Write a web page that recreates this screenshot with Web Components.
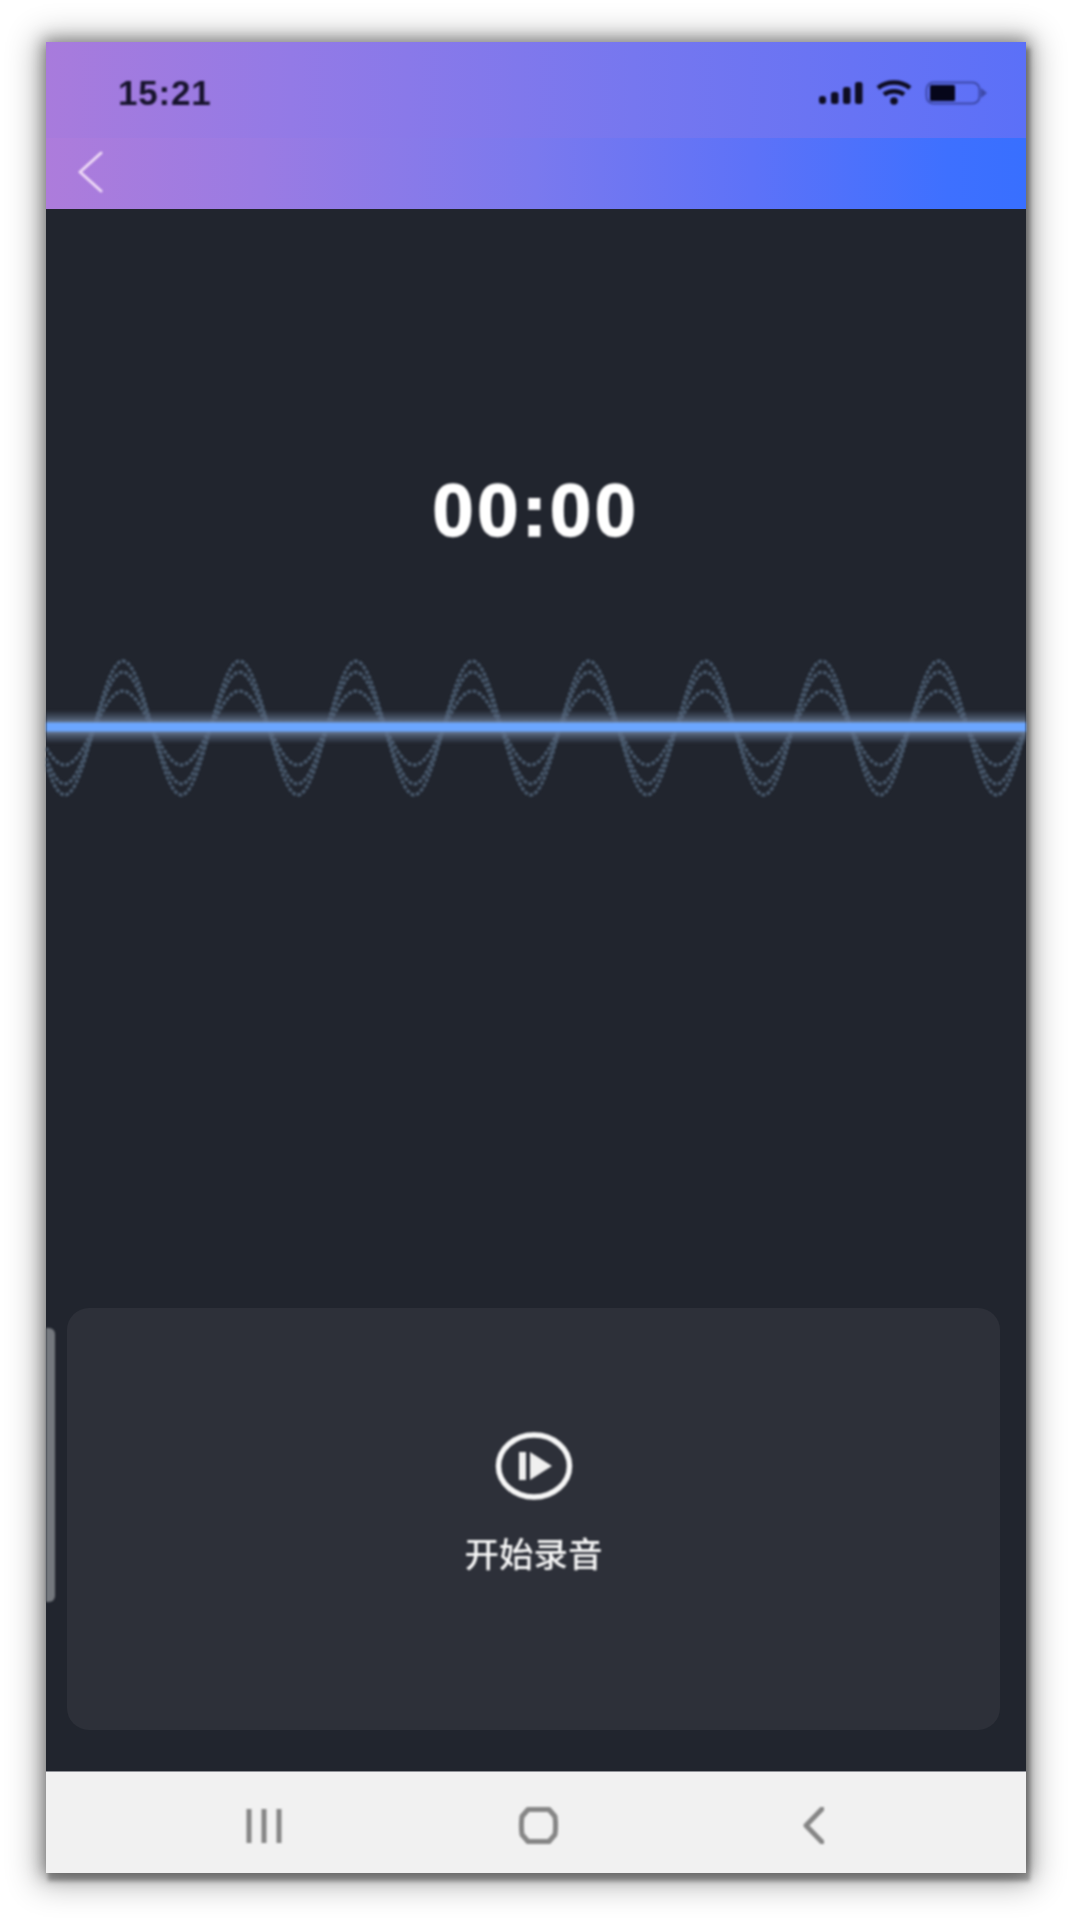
<!DOCTYPE html>
<html lang="zh">
<head>
<meta charset="utf-8">
<title>录音</title>
<style>
html,body{margin:0;padding:0;background:#fff}
body{width:1080px;height:1920px;overflow:hidden;font-family:"Liberation Sans","Noto Sans CJK SC",sans-serif}
</style>
</head>
<body>
<app-shell>
  <status-bar slot="top" time="15:21"></status-bar>
  <nav-bar slot="top"></nav-bar>
  <record-timer>00:00</record-timer>
  <wave-line></wave-line>
  <record-card>开始录音</record-card>
  <system-nav slot="bottom"></system-nav>
</app-shell>
<script>
function def(name, css, html, init){
  customElements.define(name, class extends HTMLElement{
    connectedCallback(){
      if(this.shadowRoot) return;
      const r=this.attachShadow({mode:'open'});
      r.innerHTML='<style>'+css+'</style>'+html;
      if(init) init(r,this);
    }
  });
}
def('app-shell',`
  :host{display:flex;flex-direction:column;position:relative;width:980px;height:1831px;margin:42px 54px 47px 46px;background:#21252e;
    box-shadow:3px 7px 4px 1px rgba(0,0,0,.28),0 0 14px 3px rgba(0,0,0,.34),0 3px 30px 8px rgba(0,0,0,.3)}
  main{flex:1;display:flex;flex-direction:column;min-height:0}
  .tab{position:absolute;left:0;top:1286px;width:9px;height:274px;background:#74787e;border-radius:0 6px 6px 0;filter:blur(1.2px)}
`,`<slot name="top"></slot><main><slot></slot></main><slot name="bottom"></slot><div class="tab"></div>`);

def('status-bar',`
  :host{display:flex;align-items:center;justify-content:space-between;height:96px;box-sizing:border-box;padding:5px 38px 0 72px;
    background:linear-gradient(90deg,#a87bdc 0%,#937ae6 25%,#7677ef 60%,#5b70f8 100%);color:#17132c}
  .t{font:700 35px/1 "Liberation Sans",sans-serif;letter-spacing:.8px;filter:blur(1.1px)}
  .i{display:flex;align-items:center;gap:13px;filter:blur(1px)}
  svg{display:block}
`,`<span class="t"></span><span class="i">
  <svg width="44" height="24" viewBox="0 0 44 24" fill="#0e0d22"><rect x="0" y="15" width="7" height="8" rx="3"/><rect x="12" y="11" width="7.500" height="12" rx="2.500"/><rect x="24" y="6" width="7.500" height="17" rx="2.500"/><rect x="36" y="1" width="7.500" height="22" rx="2.500"/></svg>
  <svg width="36" height="25" viewBox="0 0 36 25" fill="none" stroke="#0e0d22" stroke-width="4.500"><path d="M2 8C11 .8 25 .8 34 8"/><path d="M8 14.500C13.500 10 22.500 10 28 14.500"/><circle cx="18" cy="21" r="3.800" fill="#0e0d22" stroke="none"/></svg>
  <svg width="63" height="24" viewBox="0 0 63 24" fill="none"><rect x="1.500" y="1.500" width="53" height="21" rx="7" stroke="#3d49a8" stroke-width="2"/><rect x="5" y="4" width="25" height="16" rx="1.500" fill="#06061a"/><path d="M56 7l6 5-6 5z" fill="#3d49a8"/></svg>
</span>`,(r,h)=>{r.querySelector('.t').textContent=h.getAttribute('time')});

def('nav-bar',`
  :host{display:flex;align-items:center;height:71px;box-sizing:border-box;padding:0 0 4px 31px;
    background:linear-gradient(90deg,#ad7cdb 0%,#9a7be3 22%,#7a79ee 50%,#5d72f8 72%,#3e70ff 92%,#386fff 100%)}
  svg{display:block;filter:blur(.9px)}
`,`<svg width="26" height="42" viewBox="0 0 26 42" fill="none" stroke="#f0dcf6" stroke-width="3" stroke-linecap="round" stroke-linejoin="round"><path d="M24 2L3 21l21 19"/></svg>`);

def('record-timer',`
  :host{display:block;margin-top:262px;height:80px;text-align:center;color:#fff;font:700 74px/80px "Liberation Sans",sans-serif;letter-spacing:3.500px;filter:blur(1px);-webkit-text-stroke:1.500px #fff}
`,`<slot></slot>`);

def('wave-line',`
  :host{display:block;margin-top:99px;height:160px}
  svg{display:block;filter:blur(.9px)}
`,`<svg width="980" height="160" viewBox="0 0 980 160">
  <defs><linearGradient id="g" x1="0" y1="0" x2="0" y2="1">
    <stop offset="0" stop-color="#5f6f88" stop-opacity="0"/>
    <stop offset=".2" stop-color="#5f6f88" stop-opacity=".5"/>
    <stop offset=".36" stop-color="#6a7c98" stop-opacity=".95"/>
    <stop offset=".64" stop-color="#6a7c98" stop-opacity=".95"/>
    <stop offset=".8" stop-color="#5f6f88" stop-opacity=".5"/>
    <stop offset="1" stop-color="#5f6f88" stop-opacity="0"/>
  </linearGradient></defs>
  <g class="w" fill="none" stroke="#465669" stroke-width="3.500" stroke-dasharray="4 1.500"></g>
  <rect x="0" y="60" width="980" height="34" fill="url(#g)"/>
  <rect x="0" y="72.500" width="980" height="9" fill="#6ba6ff"/>
</svg>`,(r)=>{
  const g=r.querySelector('.w'), P=116.5, X0=77, Y=78;
  [67,56,37].forEach(a=>{
    let d='';
    for(let x=0;x<=980;x+=2){
      const y=Y-a*Math.cos(2*Math.PI*(x-X0)/P);
      d+=(x?'L':'M')+x+' '+y.toFixed(2);
    }
    const p=document.createElementNS('http://www.w3.org/2000/svg','path');
    p.setAttribute('d',d);g.appendChild(p);
  });
});

def('record-card',`
  :host{display:flex;flex-direction:column;align-items:center;box-sizing:border-box;margin:auto 26px 41px 21px;height:422px;padding-top:123px;background:#2d3039;border-radius:22px;color:#f6f6f6}
  svg{display:block;filter:blur(1px)}
  .l{margin-top:28px;font:500 34.500px/46px "Noto Sans CJK SC","Liberation Sans",sans-serif;filter:blur(1px)}
`,`<svg width="78" height="70" viewBox="0 0 78 70" fill="none"><ellipse cx="39" cy="35" rx="35.500" ry="31" stroke="#f8f8f8" stroke-width="5.500"/><rect x="24" y="21" width="7" height="28" fill="#f0f0f0"/><path d="M35 21l22 14-22 14z" fill="#f0f0f0"/></svg><span class="l"><slot></slot></span>`);

def('system-nav',`
  :host{display:flex;position:relative;height:102px;background:#f1f1f1;border-top:1px solid #8f9197;box-sizing:border-box}
  .i{display:flex;align-items:center;justify-content:center;height:100%;box-sizing:border-box;padding-top:6px}
  svg{display:block;filter:blur(1px)}
  .a{margin-left:200px}.b{margin-left:236px}.c{margin-left:243px}
`,`<span class="i a"><svg width="36" height="36" viewBox="0 0 36 36" stroke="#858585" stroke-width="5" fill="none"><path d="M3 1v34M18 1v34M33 1v34"/></svg></span>
<span class="i b"><svg width="41" height="37" viewBox="0 0 41 37" fill="none" stroke="#858585" stroke-width="5" stroke-linejoin="round"><path d="M10 2.500h21l6 7c.8 6 .8 12 0 18l-6 7H10l-6-7c-.8-6-.8-12 0-18z"/></svg></span>
<span class="i c"><svg width="22" height="37" viewBox="0 0 22 37" fill="none" stroke="#858585" stroke-width="5" stroke-linecap="round" stroke-linejoin="round"><path d="M20 2L4 18.500 20 35"/></svg></span>`);
</script>
</body>
</html>
